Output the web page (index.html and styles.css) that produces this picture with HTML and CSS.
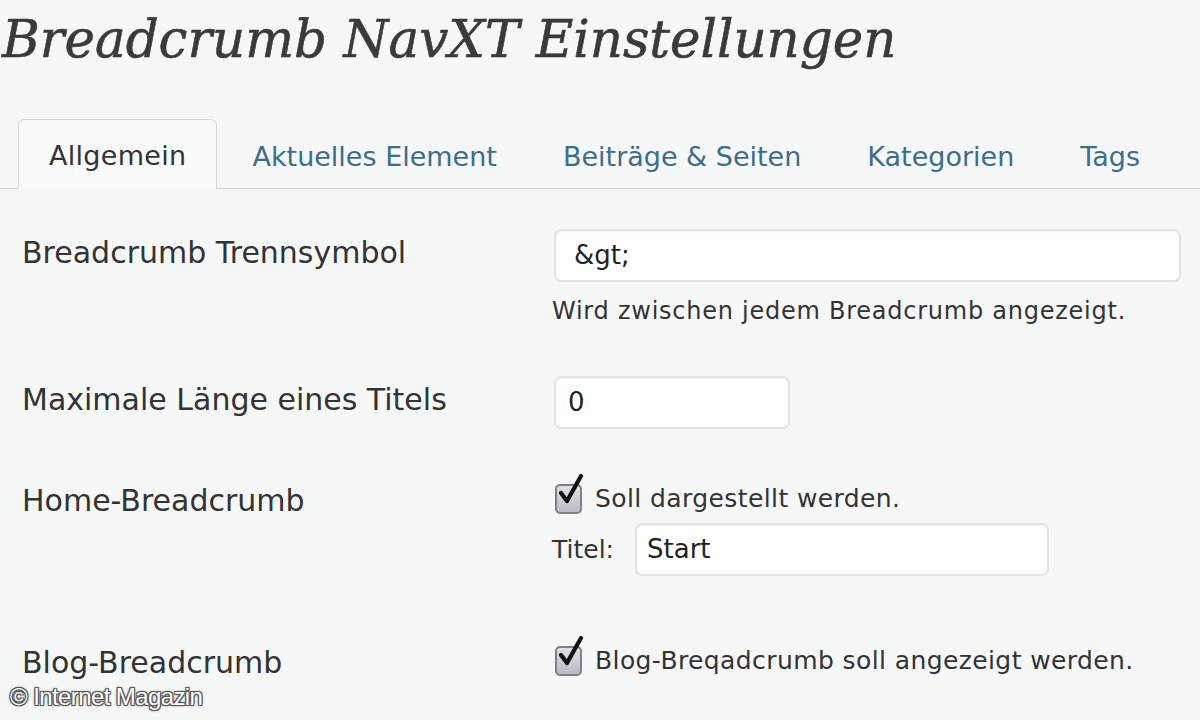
FILE: index.html
```html
<!DOCTYPE html>
<html lang="de">
<head>
<meta charset="utf-8">
<title>Breadcrumb NavXT Einstellungen</title>
<link rel="stylesheet" href="styles.css">
</head>
<body>
<div class="page">
  <h1 class="title">Breadcrumb NavXT Einstellungen</h1>
  <nav class="tabs">
    <a class="tab active">Allgemein</a>
    <a class="tab">Aktuelles Element</a>
    <a class="tab">Beiträge &amp; Seiten</a>
    <a class="tab">Kategorien</a>
    <a class="tab">Tags</a>
  </nav>
  <div class="form">
    <div class="row row-sep">
      <div class="label">Breadcrumb Trennsymbol</div>
      <div class="field">
        <div class="input input-wide">&amp;gt;</div>
        <p class="desc">Wird zwischen jedem Breadcrumb angezeigt.</p>
      </div>
    </div>
    <div class="row row-max">
      <div class="label">Maximale Länge eines Titels</div>
      <div class="field">
        <div class="input input-small">0</div>
      </div>
    </div>
    <div class="row row-home">
      <div class="label label-check">Home-Breadcrumb</div>
      <div class="field">
        <div class="check-line">
          <span class="checkbox"><svg viewBox="0 0 30 36" width="30" height="36"><path d="M6 19 L12 27 L26 2" fill="none" stroke="#111" stroke-width="4.2" stroke-linecap="round" stroke-linejoin="round"/></svg></span>
          <span class="check-text">Soll dargestellt werden.</span>
        </div>
        <div class="title-line">
          <span class="inline-label">Titel:</span>
          <div class="input input-title">Start</div>
        </div>
      </div>
    </div>
    <div class="row row-blog">
      <div class="label label-check">Blog-Breadcrumb</div>
      <div class="field">
        <div class="check-line">
          <span class="checkbox"><svg viewBox="0 0 30 36" width="30" height="36"><path d="M6 19 L12 27 L26 2" fill="none" stroke="#111" stroke-width="4.2" stroke-linecap="round" stroke-linejoin="round"/></svg></span>
          <span class="check-text">Blog-Breqadcrumb soll angezeigt werden.</span>
        </div>
      </div>
    </div>
  </div>
  <div class="watermark">© Internet Magazin</div>
</div>
</body>
</html>
```
FILE: styles.css
```css
html, body {
  margin: 0;
  padding: 0;
  background: #f6f7f7;
}
body {
  width: 1200px;
  height: 720px;
  overflow: hidden;
  font-family: "DejaVu Sans", "Noto Sans", sans-serif;
  color: #333;
}
.page {
  position: relative;
  width: 1200px;
  height: 720px;
}
.title {
  margin: 0 0 31px 0;
  padding-left: 2px;
  height: 88px;
  font-family: "DejaVu Serif", "Liberation Serif", serif;
  font-style: italic;
  font-weight: normal;
  font-size: 51.5px;
  line-height: 78px;
  color: #3a3a3a;
  -webkit-text-stroke: 0.6px #3a3a3a;
  white-space: nowrap;
}
.tabs {
  display: flex;
  align-items: flex-end;
  padding-left: 18px;
  border-bottom: 1px solid #d2d5d6;
  height: 69px;
}
.tab {
  display: block;
  padding: 20px 30px 16px;
  margin-right: 4px;
  margin-bottom: -1px;
  font-size: 27px;
  letter-spacing: 0;
  line-height: 32px;
  color: #3d6d8d;
  border: 1px solid transparent;
  border-bottom: none;
  white-space: nowrap;
}
.tab.active {
  color: #333;
  background: #f9fafa;
  border: 1px solid #d6d9da;
  border-bottom: 1px solid #f9fafa;
  border-radius: 6px 6px 0 0;
  letter-spacing: 0.3px;
}
.form {
  padding-top: 40px;
}
.row {
  display: flex;
}
.label {
  width: 530px;
  padding-left: 22px;
  box-sizing: border-box;
  font-size: 30px;
  line-height: 34px;
  padding-top: 7px;
  color: #333;
  white-space: nowrap;
}
.field {
  flex: 1;
  padding-left: 22px;
}
.input {
  box-sizing: border-box;
  height: 53px;
  background: #fff;
  border: 2px solid #e3e4e4;
  border-radius: 7px;
  box-shadow: inset 0 1px 2px rgba(0,0,0,0.06);
  font-size: 26px;
  line-height: 49px;
  padding-left: 18px;
  color: #222;
}
.input-wide {
  width: 627px;
  margin-left: 2px;
}
.input-small {
  width: 236px;
  margin-left: 2px;
  padding-left: 12px;
}
.input-title {
  width: 414px;
  padding-left: 10px;
}
.desc {
  margin: 13px 0 0 0;
  font-size: 24px;
  letter-spacing: 0.75px;
  line-height: 32px;
  color: #333;
}
.row-sep {
  height: 147px;
}
.row-max {
  height: 103px;
}
.row-home {
  height: 162px;
}
.label-check {
  padding-top: 5px;
}
.check-line {
  display: flex;
  align-items: flex-end;
  height: 35px;
  margin-left: 3px;
}
.checkbox {
  position: relative;
  display: inline-block;
  width: 27px;
  height: 30px;
  box-sizing: border-box;
  border: 2px solid #7d8085;
  border-radius: 5px;
  background: linear-gradient(#dfe1e6, #b9bcc4);
  margin-right: 13px;
  flex: none;
}
.checkbox svg {
  position: absolute;
  left: -2px;
  top: -12px;
}
.check-text {
  font-size: 25px;
  letter-spacing: 0.4px;
  line-height: 30px;
  color: #333;
  white-space: nowrap;
}
.title-line {
  display: flex;
  align-items: center;
  margin-top: 9px;
}
.inline-label {
  font-size: 25px;
  width: 83px;
  color: #333;
}
.watermark {
  position: absolute;
  left: 10px;
  top: 683px;
  font-family: "Liberation Sans", sans-serif;
  font-size: 24px;
  letter-spacing: -0.6px;
  color: #fff;
  text-shadow: -1px -1px 0 #555, 1px -1px 0 #555, -1px 1px 0 #555, 1px 1px 0 #555, 0 0 3px #000;
}
```
